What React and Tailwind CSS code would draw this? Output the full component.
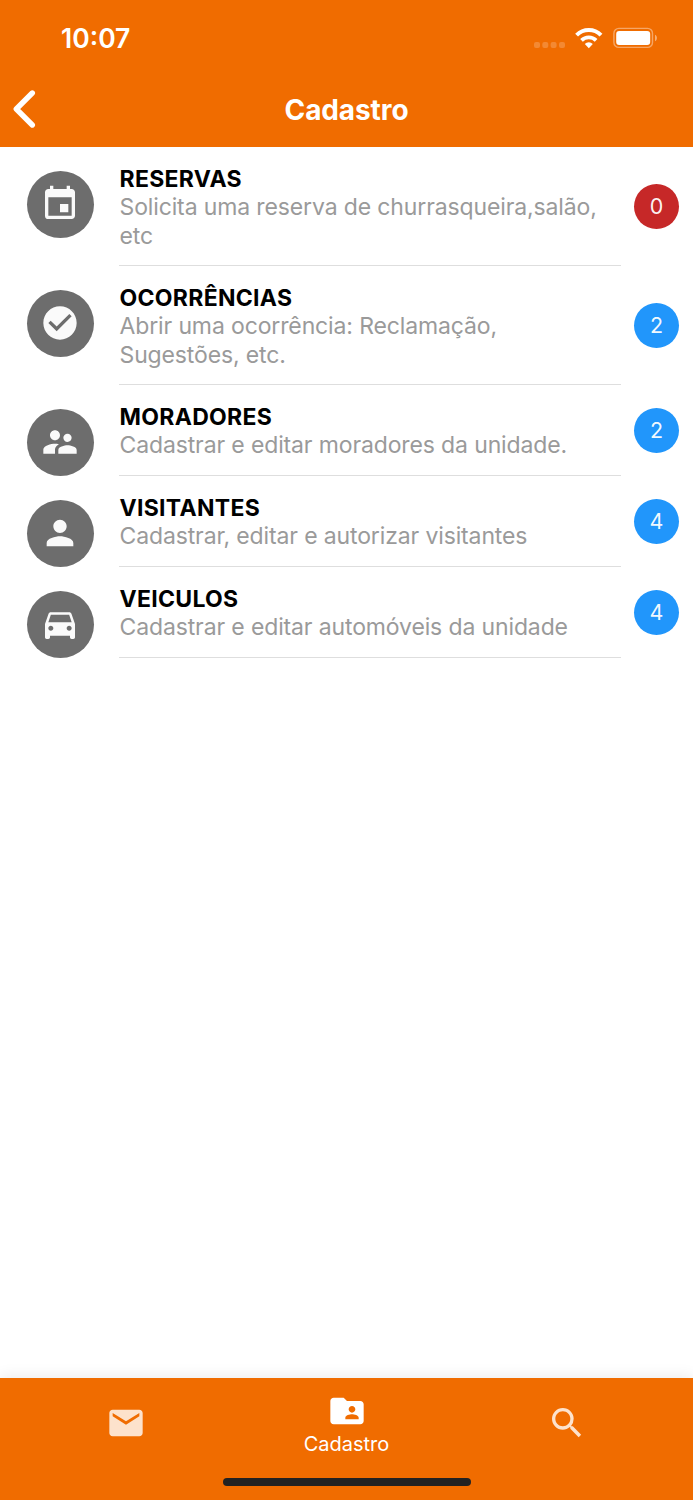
import React from 'react';
import {
    MdEvent,
    MdCheckCircle,
    MdSupervisorAccount,
    MdPerson,
    MdDirectionsCar,
    MdEmail,
    MdFolderShared,
    MdSearch,
} from 'react-icons/md';

const items = [
    { title: 'RESERVAS', text: 'Solicita uma reserva de churrasqueira,salão, etc', icon: MdEvent, count: 0 },
    { title: 'OCORRÊNCIAS', text: 'Abrir uma ocorrência: Reclamação, Sugestões, etc.', icon: MdCheckCircle, count: 2 },
    { title: 'MORADORES', text: 'Cadastrar e editar moradores da unidade.', icon: MdSupervisorAccount, count: 2 },
    { title: 'VISITANTES', text: 'Cadastrar, editar e autorizar visitantes', icon: MdPerson, count: 4 },
    { title: 'VEICULOS', text: 'Cadastrar e editar automóveis da unidade', icon: MdDirectionsCar, count: 4 },
];

const StatusBar = () => (
    <div className="flex h-[75px] items-center justify-between pl-[61px] pr-[35px]">
        <span className="pt-px text-[26.5px] font-semibold leading-none">10:07</span>
        <svg width="124" height="22" viewBox="0 0 124 22" fill="none">
            <g fill="#fff" fillOpacity="0.2">
                <rect x="0" y="15" width="6" height="6" rx="2" />
                <rect x="8.3" y="15" width="6" height="6" rx="2" />
                <rect x="16.6" y="15" width="6" height="6" rx="2" />
                <rect x="25" y="15" width="6" height="6" rx="2" />
            </g>
            {/* wifi */}
            <g stroke="#fff" strokeWidth="4">
                <path d="M42.6 8.2a17.2 17.2 0 0 1 24.4 0" />
                <path d="M47.5 13.4a10.4 10.4 0 0 1 14.6 0" strokeWidth="3.8" />
            </g>
            <path d="M50.8 16.9a6 6 0 0 1 8 0L54.8 21.2z" fill="#fff" />
            {/* battery */}
            <rect x="79.9" y="1.4" width="38.6" height="19" rx="5" stroke="#fff" strokeOpacity="0.4" strokeWidth="1.4" />
            <rect x="82.2" y="4" width="34" height="14" rx="3" fill="#fff" />
            <path d="M121 7.7c2.6.9 2.6 5.7 0 6.6z" fill="#fff" fillOpacity="0.45" />
        </svg>
    </div>
);

const Header = () => (
    <header className="h-[147px] bg-[#f06c00] text-white">
        <StatusBar />
        <div className="grid h-[68px] grid-cols-3 items-center">
            <button className="pl-[13px]">
                <svg width="24" height="40" viewBox="0 0 24 40" fill="none" stroke="#fff" strokeWidth="5.4" strokeLinecap="round" strokeLinejoin="round">
                    <path d="M19.3 4 3.3 20l16 16" />
                </svg>
            </button>
            <h1 className="pt-[2px] text-center text-[28px] font-bold leading-none tracking-[-0.1px]">Cadastro</h1>
        </div>
    </header>
);

const ListItem = ({ item }) => {
    const Icon = item.icon;
    return (
        <li className="flex pl-[27px] pr-[14px]">
            <div className="h-[91px] pt-[23.3px]">
                <div className="flex size-[67px] items-center justify-center rounded-full bg-[#6d6d6d] pb-px pr-[2px]">
                    <Icon className="size-10 shrink-0 text-[#fafafa]" />
                </div>
            </div>
            <div className="ml-[25px] w-[502px] border-b border-[#dedede] pb-[15.1px] pl-[0.5px] pt-[17.3px] text-[23px] leading-[28.5px]">
                <h2 className="font-bold tracking-[0.3px] text-black">{item.title}</h2>
                <p className="tracking-[-0.13px] text-[#9a9a9a]">{item.text}</p>
            </div>
            <div
                className={`ml-auto flex size-[45px] items-center justify-center self-center rounded-full pb-px text-[21.5px] text-white/95 ${item.count === 0 ? 'bg-[#c62828]' : 'bg-[#2196fb]'}`}
            >
                {item.count}
            </div>
        </li>
    );
};

const TabBar = () => (
    <footer className="h-[122px] bg-[#f06c00] text-white shadow-[0_-2px_14px_rgba(0,0,0,0.08)]">
        <nav className="grid h-[90px] grid-cols-[252px_1fr_252px]">
            <a className="flex items-center justify-center pb-px text-[#fde2cc]">
                <MdEmail className="size-10" />
            </a>
            <a className="flex flex-col items-center pt-[13px]">
                <MdFolderShared className="size-10" />
                <span className="text-xl leading-[26px]">Cadastro</span>
            </a>
            <a className="flex items-center justify-center pb-px text-[#fde2cc]">
                <MdSearch className="size-10" />
            </a>
        </nav>
        <div className="mx-auto mt-[10px] h-[8px] w-[248px] rounded-full bg-[#222]"></div>
    </footer>
);

const App = () => {
    return (
        <div className="flex h-[1500px] w-[693px] flex-col overflow-hidden bg-white font-['Inter',sans-serif]">
            <Header />
            <ul className="flex-1 pt-[0.5px]">
                {items.map((item) => (
                    <ListItem key={item.title} item={item} />
                ))}
            </ul>
            <TabBar />
        </div>
    );
};

export default App;
